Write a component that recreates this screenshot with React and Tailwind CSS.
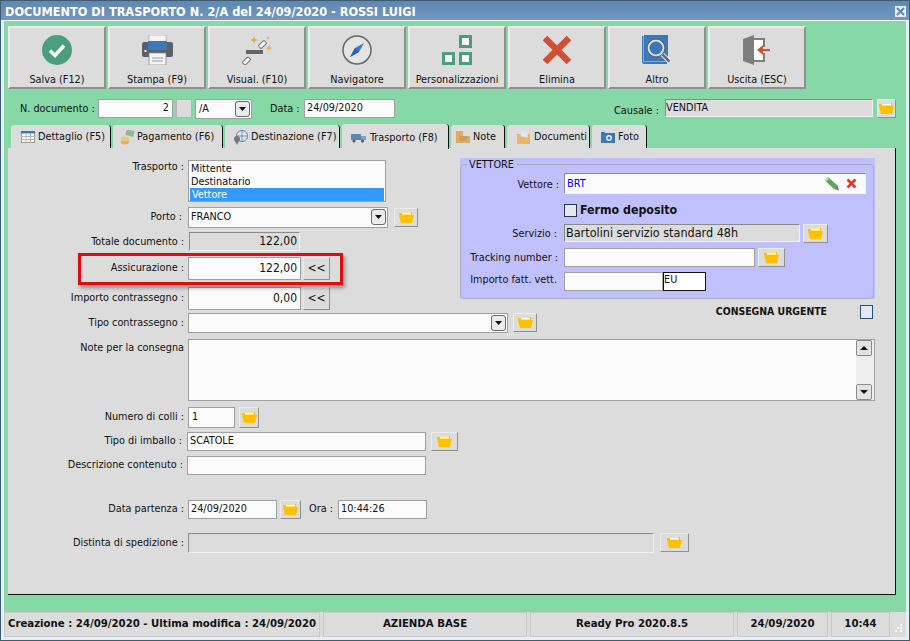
import React from "react";

const F = "[font-family:'DejaVu_Sans_Condensed','DejaVu_Sans',sans-serif]";

function FolderIcon() {
  return (
    <svg width="15" height="11" viewBox="0 0 15 11">
      <path d="M0 1h3V0h10v3h2L13 11H2L0 3z" fill="#ffc000" />
      <rect x="3" y="0.5" width="9" height="2" fill="#fff" />
    </svg>
  );
}

function FolderBtn({ w, h, cls = "" }) {
  return (
    <button className={`${w} ${h} ${cls} flex items-center justify-center bg-[#dcdcdc] border border-t-[#ececec] border-l-[#ececec] border-r-[#8f8f8f] border-b-[#8f8f8f] shrink-0`}>
      <FolderIcon />
    </button>
  );
}

function Arrow() {
  return (
    <span className="w-[15px] h-[16px] flex items-center justify-center rounded-[3px] border border-[#6b6b6b] bg-[#ececec] shrink-0">
      <svg width="7" height="4" viewBox="0 0 7 4"><path d="M0 0h7L3.5 4z" fill="#111" /></svg>
    </span>
  );
}

function ToolBtn({ label, children }) {
  return (
    <button className="w-[98px] h-[63px] flex flex-col items-center bg-[#dcdcdc] border-2 border-t-[#ececec] border-l-[#ececec] border-r-[#8f8f8f] border-b-[#8f8f8f] shrink-0">
      <span className="h-[30px] mt-[7px] flex items-center justify-center">{children}</span>
      <span className="mt-[8px] text-[#111] leading-[14px] whitespace-nowrap">{label}</span>
    </button>
  );
}

function Tab({ w, active, icon, label, pad = "pl-[9px]", gap = "gap-[3px]" }) {
  const base = active ? "h-[25px] -mb-[1px] z-10 pt-[3px]" : "h-[23px] pt-[2px]";
  return (
    <div className={`${w} ${base} ${pad} ${gap} flex items-center bg-[#dcdcdc] rounded-t-[3px] border-r border-r-[#111] text-[#111] whitespace-nowrap`}>
      {icon}
      <span>{label}</span>
    </div>
  );
}

const inputCls = "bg-[#fbfbfb] border border-[#a0a0a0] flex items-center text-[#111]";
const sunkenCls = "bg-[#dcdcdc] border border-t-[#8a8a8a] border-l-[#8a8a8a] border-r-[#f2f2f2] border-b-[#f2f2f2] flex items-center text-[#111]";

function Row({ label, mt, lw = "w-[176px]", gap = "gap-[4px]", children, align = "items-center" }) {
  return (
    <div className={`flex ${align} ${mt} ${gap}`}>
      <div className={`${lw} text-right text-[#111] whitespace-nowrap shrink-0`}>{label}</div>
      {children}
    </div>
  );
}

function Tri({ up }) {
  return (
    <span className="w-[16px] h-[16px] flex items-center justify-center bg-[#e2e2e2] border border-[#8c8c8c] rounded-[2px]">
      <svg width="8" height="4" viewBox="0 0 8 4"><path d={up ? "M0 4h8L4 0z" : "M0 0h8L4 4z"} fill="#111" /></svg>
    </span>
  );
}

export default function App() {
  return (
    <div className={`${F} relative w-[910px] h-[641px] text-[10.8px] flex flex-col bg-[#e6eef6] border border-[#3f5a73] overflow-hidden`}>
      <div className="h-[20px] flex items-center justify-between pt-[4px] pl-[4px] pr-[3px] bg-gradient-to-b from-[#5f87b0] to-[#7397bf] border-b border-b-[#f2f6fa]">
        <span className="text-white font-bold text-[12.6px] whitespace-nowrap">DOCUMENTO DI TRASPORTO N. 2/A del 24/09/2020 - ROSSI LUIGI</span>
        <span className="w-[11px] h-[11px] -mt-[2px] bg-[#e8eef5] flex items-center justify-center">
          <svg width="9" height="9" viewBox="0 0 9 9"><path d="M1 1l7 7M8 1L1 8" stroke="#5f87b0" strokeWidth="2" /></svg>
        </span>
      </div>

      <div className="flex-1 ml-[3px] mr-[3px] bg-[#87d8a7] flex flex-col min-h-0">
        {/* toolbar */}
        <div className="flex gap-[2px] pl-[4px] pt-[5px]">
          <ToolBtn label="Salva (F12)">
            <svg width="30" height="30" viewBox="0 0 30 30">
              <circle cx="15" cy="15" r="15" fill="#4b9e7c" />
              <path d="M8 15.5l5 5 9-10" fill="none" stroke="#fff" strokeWidth="3.5" />
            </svg>
          </ToolBtn>
          <ToolBtn label="Stampa (F9)">
            <svg width="31" height="30" viewBox="0 0 31 30">
              <rect x="7" y="0" width="17" height="8" fill="#f4f4f4" stroke="#999" strokeWidth=".6" />
              <rect x="0" y="7" width="31" height="15" rx="2" fill="#5a6069" />
              <rect x="6" y="6" width="19" height="9" fill="#3b78b8" />
              <rect x="7" y="18" width="17" height="12" fill="#f4f4f4" stroke="#8d8d8d" strokeWidth=".8" />
              <path d="M10 23h11M10 26h11" stroke="#999" />
              <rect x="2.5" y="15" width="2" height="2" fill="#fff" />
            </svg>
          </ToolBtn>
          <ToolBtn label="Visual. (F10)">
            <svg width="32" height="30" viewBox="0 0 32 30">
              <rect x="5" y="15" width="17" height="4" fill="#666" />
              <rect x="19.5" y="5.5" width="4" height="8" rx="1" transform="rotate(45 21.5 9.5)" fill="#f4f4f4" stroke="#777" />
              <rect x="3.5" y="22" width="4" height="8" rx="1" transform="rotate(45 5.5 26)" fill="#f4f4f4" stroke="#777" />
              <path d="M13 1l1 3 3 1-3 1-1 3-1-3-3-1 3-1z" fill="#eda935" />
              <path d="M28 10l.8 2.2 2.2.8-2.2.8-.8 2.2-.8-2.2-2.2-.8 2.2-.8z" fill="#eda935" />
              <path d="M27 1l.6 1.4 1.4.6-1.4.6-.6 1.4-.6-1.4L25 3l1.4-.6z" fill="#eda935" />
            </svg>
          </ToolBtn>
          <ToolBtn label="Navigatore">
            <svg width="30" height="30" viewBox="0 0 30 30">
              <circle cx="15" cy="15" r="14" fill="#e4e4e4" stroke="#666" strokeWidth="1.5" />
              <path d="M22 8l-5 9-9 5 5-9z" fill="#3b78c8" />
              <path d="M13 13l4 4-9 5z" fill="#2b62a8" />
            </svg>
          </ToolBtn>
          <ToolBtn label="Personalizzazioni">
            <svg width="30" height="30" viewBox="0 0 30 30" fill="#fafafa" stroke="#4b9e7c" strokeWidth="3">
              <rect x="18.5" y="1.5" width="10" height="10" />
              <rect x="1.5" y="18.5" width="10" height="10" />
              <rect x="18.5" y="18.5" width="10" height="10" />
            </svg>
          </ToolBtn>
          <ToolBtn label="Elimina">
            <svg width="30" height="30" viewBox="0 0 30 30"><path d="M3 3l24 24M27 3L3 27" stroke="#d14f33" strokeWidth="6.5" /></svg>
          </ToolBtn>
          <ToolBtn label="Altro">
            <svg width="30" height="30" viewBox="0 0 30 30">
              <path d="M0 1h1.5v26H25v2H2a2 2 0 01-2-2z" fill="#3b78b8" />
              <rect x="2" y="0" width="24" height="26.5" fill="#3b78b8" />
              <circle cx="14" cy="13" r="7.5" fill="#3b78b8" stroke="#dcdcdc" strokeWidth="2" />
              <circle cx="14" cy="13" r="9" fill="none" stroke="#666" strokeWidth="1" />
              <path d="M20.5 19.5l7 7" stroke="#fff" strokeWidth="4.5" />
              <path d="M20.5 19.5l7 7" stroke="#666" strokeWidth="2.5" />
            </svg>
          </ToolBtn>
          <ToolBtn label="Uscita (ESC)">
            <svg width="28" height="30" viewBox="0 0 28 30">
              <path d="M0 4l11-4v30L0 26z" fill="#7d7d7d" />
              <path d="M11 4h10v22H11z" fill="#fff" />
              <path d="M11 3h11v9h-2V5h-9zM11 25h9v-7h2v9H11z" fill="#7d7d7d" />
              <path d="M27 15H18" stroke="#d14f33" strokeWidth="2" />
              <path d="M20 10l-6 5 6 5z" fill="#d14f33" />
            </svg>
          </ToolBtn>
        </div>

        {/* document row */}
        <div className="flex items-start h-[20px] mt-[10px] pl-[16px]">
          <span className="text-[#111] mt-[2px] w-[78px] whitespace-nowrap">N. documento :</span>
          <div className={`${inputCls} w-[75px] h-[19px] justify-end pr-[3px]`}>2</div>
          <div className="w-[16px] h-[19px] ml-[3px] bg-[#dcdcdc] border border-[#b4b4b4] rounded-[1px]"></div>
          <div className={`${inputCls} w-[57px] h-[20px] ml-[3px] pl-[3px] justify-between pr-[1px]`}>
            <span>/A</span><Arrow />
          </div>
          <span className="text-[#111] mt-[2px] ml-[18px] w-[34px] whitespace-nowrap">Data :</span>
          <div className={`${inputCls} w-[91px] h-[19px] pl-[2px]`}>24/09/2020</div>
          <span className="text-[#111] mt-[4px] ml-[219px] w-[51px] whitespace-nowrap">Causale :</span>
          <div className={`${sunkenCls} w-[208px] h-[18px] !items-start`}>VENDITA</div>
          <FolderBtn w="w-[19px]" h="h-[19px]" cls="ml-[4px]" />
        </div>

        {/* tabs */}
        <div className="flex items-end gap-[2px] h-[25px] mt-[4px] pl-[7px]">
          <Tab w="w-[100px]" pad="pl-[10px]" label="Dettaglio (F5)" icon={
            <svg width="14" height="12" viewBox="0 0 14 12"><rect x=".5" y=".5" width="13" height="11" fill="#fff" stroke="#999" /><rect x="0" y="0" width="14" height="2.5" fill="#3b78b8" /><path d="M0 5.5h14M0 8.5h14M5 3v9M9.5 3v9" stroke="#b5b5b5" /></svg>
          } />
          <Tab w="w-[110px]" pad="pl-[7px]" gap="gap-[2px]" label="Pagamento (F6)" icon={
            <svg width="15" height="15" viewBox="0 0 15 15"><rect x="6" y="0" width="8" height="6" transform="rotate(15 10 3)" fill="#8fb79a" /><ellipse cx="5" cy="12" rx="4" ry="2.5" fill="#e6b04c" /><ellipse cx="5" cy="9" rx="4" ry="2.5" fill="#f0c76a" /></svg>
          } />
          <Tab w="w-[115px]" pad="pl-[8px]" label="Destinazione (F7)" icon={
            <svg width="15" height="15" viewBox="0 0 15 15"><circle cx="9" cy="6" r="5.5" fill="#dfe7f0" stroke="#5a83b3" /><path d="M3.5 6h11M9 .5v11" stroke="#5a83b3" strokeWidth=".8" /><circle cx="4" cy="9" r="3" fill="#777" /><path d="M2 11l2 4 2-4z" fill="#777" /></svg>
          } />
          <Tab w="w-[107px]" active gap="gap-[4px]" label="Trasporto (F8)" icon={
            <svg width="15" height="10" viewBox="0 0 15 10"><rect x="0" y="1" width="10" height="6" fill="#5a86b8" /><rect x="10" y="3" width="5" height="4" fill="#7fa0c6" /><circle cx="3" cy="8" r="1.5" fill="#555" /><circle cx="11.5" cy="8" r="1.5" fill="#555" /></svg>
          } />
          <Tab w="w-[54px]" pad="pl-[5px]" label="Note" icon={
            <svg width="14" height="12" viewBox="0 0 14 12"><path d="M0 0h7v5h7v7H0z" fill="#e0ac5c" /><rect x="3" y="5" width="8" height="5" fill="#c7a06a" /></svg>
          } />
          <Tab w="w-[83px]" label="Documenti" icon={
            <svg width="15" height="13" viewBox="0 0 15 13"><path d="M1 3h13v10H1z" fill="#eab567" /><rect x="5" y="0" width="7" height="6" transform="rotate(10 8 3)" fill="#dbe6f2" /></svg>
          } />
          <Tab w="w-[55px]" label="Foto" icon={
            <svg width="14" height="11" viewBox="0 0 14 11"><rect x="0" y="1" width="14" height="10" fill="#3b78b8" /><rect x="0" y="0" width="4" height="2" fill="#3b78b8" /><circle cx="8" cy="6" r="3" fill="#eef3f8" /><circle cx="8" cy="6" r="1.6" fill="#3b78b8" /></svg>
          } />
        </div>

        {/* panel */}
        <div className="relative w-[888px] h-[448px] ml-[4px] bg-[#dcdcdc] border-r border-b border-r-[#111] border-b-[#111]">
          <div className="flex h-[152px] pt-[10px] box-content">
            <div className="w-[452px] shrink-0 pt-[2px]">
              <Row label={<span className="block -mt-[1px]">Trasporto :</span>} align="items-start">
                <div className="w-[198px] h-[42px] bg-[#fbfbfb] border border-[#a0a0a0] px-[1px] pt-[1px] text-[#111] leading-[13px]">
                  <div className="pl-[1px]">Mittente</div>
                  <div className="pl-[1px]">Destinatario</div>
                  <div className="pl-[2px] bg-[#3399ff] text-white">Vettore</div>
                </div>
              </Row>
              <Row label={<span className="pr-[2px]">Porto :</span>} mt="mt-[5px]">
                <div className={`${inputCls} w-[200px] h-[21px] pl-[2px] pr-[1px] justify-between`}>
                  <span>FRANCO</span><Arrow />
                </div>
                <FolderBtn w="w-[24px]" h="h-[19px]" cls="ml-[2px]" />
              </Row>
              <Row label={<span className="block pt-[2px]">Totale documento :</span>} mt="mt-[4px]">
                <div className={`${sunkenCls} w-[111px] h-[19px] ml-[1px] justify-end pr-[2px] text-[12px]`}>122,00</div>
              </Row>
              <Row label="Assicurazione :" mt="mt-[6px]">
                <div className={`${inputCls} w-[113px] h-[23px] justify-end pr-[3px] text-[12px]`}>122,00</div>
                <button className="w-[27px] h-[23px] -ml-[2px] bg-[#dcdcdc] border border-t-[#ececec] border-l-[#ececec] border-r-[#8f8f8f] border-b-[#8f8f8f] text-[#111] text-[12px]">&lt;&lt;</button>
              </Row>
              <Row label="Importo contrassegno :" mt="mt-[7px]">
                <div className={`${inputCls} w-[113px] h-[23px] justify-end pr-[3px] text-[12px]`}>0,00</div>
                <button className="w-[27px] h-[23px] -ml-[2px] bg-[#dcdcdc] border border-t-[#ececec] border-l-[#ececec] border-r-[#8f8f8f] border-b-[#8f8f8f] text-[#111] text-[12px]">&lt;&lt;</button>
              </Row>
            </div>

            <div className="w-[415px] shrink-0">
              <div className="h-[141px] bg-[#c0c0ff]">
                <fieldset className="h-[141px] w-[414px] border border-[#a9a9c4] rounded-[4px]">
                  <legend className="ml-[6px] px-[2px] leading-[13px] text-[#111]">VETTORE</legend>
                  <Row label={<span className="block pt-[3px]">Vettore :</span>} lw="w-[98px]" gap="gap-[5px]" mt="mt-[2px]">
                    <div className={`${sunkenCls} !bg-[#fbfbfb] w-[302px] h-[21px] pl-[2px] pr-[8px] pt-[1px] justify-between`}>
                      <span className="text-[#0000ee]">BRT</span>
                      <span className="flex items-center gap-[6px]">
                        <svg width="15" height="14" viewBox="0 0 15 14"><path d="M0 3.500L3 0l9.500 8.500L9 12z" fill="#4fae4f" /><path d="M0 3.500L3 0l1.500 1.400L1.400 4.800z" fill="#a8dca8" /><path d="M12.500 8.500l1.500 5-5-1.500z" fill="#777" /></svg>
                        <svg width="11" height="11" viewBox="0 0 11 11"><path d="M1.500 1.500l8 8M9.500 1.500l-8 8" stroke="#e0362c" strokeWidth="2.600" /></svg>
                      </span>
                    </div>
                  </Row>
                  <div className="flex items-center h-[13px] mt-[10px] ml-[103px]">
                    <span className="w-[13px] h-[13px] bg-[#e6e6ee] border border-[#27344a]"></span>
                    <span className="ml-[3px] font-bold text-[12.3px] text-[#111] whitespace-nowrap">Fermo deposito</span>
                  </div>
                  <Row label={<span className="block pt-[2px]">Servizio :</span>} lw="w-[96px]" gap="gap-[7px]" mt="mt-[7px]">
                    <div className={`${sunkenCls} w-[236px] h-[18px] pl-[1px] text-[12.5px]`}>Bartolini servizio standard 48h</div>
                    <FolderBtn w="w-[25px]" h="h-[19px]" cls="-ml-[4px]" />
                  </Row>
                  <Row label={<span className="block pt-[2px]">Tracking number :</span>} lw="w-[97px]" gap="gap-[6px]" mt="mt-[5px]">
                    <div className={`${inputCls} w-[191px] h-[19px]`}></div>
                    <FolderBtn w="w-[27px]" h="h-[19px]" cls="-ml-[3px]" />
                  </Row>
                  <Row label={<span className="block -mt-[2px]">Importo fatt. vett.</span>} lw="w-[96px]" gap="gap-[7px]" mt="mt-[5px]">
                    <div className={`${inputCls} w-[99px] h-[19px]`}></div>
                    <div className="w-[43px] h-[19px] -ml-[7px] bg-white border border-[#111] text-[#111] leading-[14px]">EU</div>
                  </Row>
                </fieldset>
              </div>
              <div className="flex items-center justify-end mt-[6px] pr-[2px]">
                <span className="font-bold text-[10.4px] text-[#111] mr-[33px] whitespace-nowrap -mt-[1px]">CONSEGNA URGENTE</span>
                <span className="w-[13px] h-[14px] bg-[#e6e6ee] border border-[#27507a]"></span>
              </div>
            </div>
          </div>

          <Row label="Tipo contrassegno :" mt="mt-[3px]">
            <div className={`${inputCls} w-[320px] h-[20px] pr-[1px] justify-end`}><Arrow /></div>
            <FolderBtn w="w-[24px]" h="h-[19px]" cls="ml-[1px]" />
          </Row>
          <Row label={<span className="block mt-[1px]">Note per la consegna</span>} mt="mt-[6px]" align="items-start">
            <div className="w-[687px] h-[62px] bg-[#fbfbfb] border border-[#a0a0a0] flex justify-end">
              <div className="w-[18px] h-full bg-[#eeeeee] flex flex-col justify-between pr-[2px]">
                <Tri up /><Tri />
              </div>
            </div>
          </Row>
          <Row label="Numero di colli :" mt="mt-[6px]">
            <div className={`${inputCls} w-[47px] h-[21px] pl-[3px]`}>1</div>
            <FolderBtn w="w-[20px]" h="h-[21px]" />
          </Row>
          <Row label={<span className="pr-[2px]">Tipo di imballo :</span>} gap="gap-[3px]" mt="mt-[4px]">
            <div className={`${inputCls} w-[239px] h-[19px] pl-[2px]`}>SCATOLE</div>
            <FolderBtn w="w-[27px]" h="h-[19px]" cls="ml-[2px]" />
          </Row>
          <Row label={<span className="pr-[1px]">Descrizione contenuto :</span>} gap="gap-[3px]" mt="mt-[5px]">
            <div className={`${inputCls} w-[239px] h-[19px]`}></div>
          </Row>
          <Row label="Data partenza :" mt="mt-[25px]">
            <div className={`${inputCls} w-[89px] h-[19px] pl-[2px]`}>24/09/2020</div>
            <FolderBtn w="w-[21px]" h="h-[19px]" cls="-ml-[1px]" />
            <span className="text-[#111] ml-[4px] w-[25px] whitespace-nowrap">Ora :</span>
            <div className={`${inputCls} w-[89px] h-[19px] pl-[2px]`}>10:44:26</div>
          </Row>
          <Row label="Distinta di spedizione :" mt="mt-[14px]">
            <div className={`${sunkenCls} w-[466px] h-[20px]`}></div>
            <FolderBtn w="w-[29px]" h="h-[19px]" cls="ml-[2px]" />
          </Row>

          {/* highlight */}
          <div className="absolute left-[70px] top-[105px] w-[265px] h-[32px] border-[3px] border-[#e00b0b] shadow-[2px_3px_4px_rgba(0,0,0,0.35)]"></div>
        </div>

        {/* status */}
        <div className="flex h-[25px] mt-[17px] bg-[#dcdcdc] gap-[3px] font-bold text-[#111] shrink-0">
          {[
            ["w-[316px]", "Creazione : 24/09/2020 - Ultima modifica : 24/09/2020"],
            ["w-[204px]", "AZIENDA BASE"],
            ["w-[204px]", "Ready Pro 2020.8.5"],
            ["w-[91px]", "24/09/2020"],
            ["w-[59px]", "10:44"],
          ].map(([w, t]) => (
            <div key={t} className={`${w} flex items-center justify-center border border-[#c8c8c8] text-[11.3px] whitespace-nowrap`}>{t}</div>
          ))}
          <svg className="self-end mb-[5px] ml-[2px]" width="8" height="8" viewBox="0 0 8 8" fill="#fafafa">
            <rect x="5" y="0" width="2" height="2" /><rect x="2" y="3" width="2" height="2" /><rect x="5" y="3" width="2" height="2" /><rect x="0" y="6" width="2" height="2" /><rect x="5" y="6" width="2" height="2" />
          </svg>
        </div>
      </div>
      <div className="h-[3px] shrink-0"></div>
    </div>
  );
}
